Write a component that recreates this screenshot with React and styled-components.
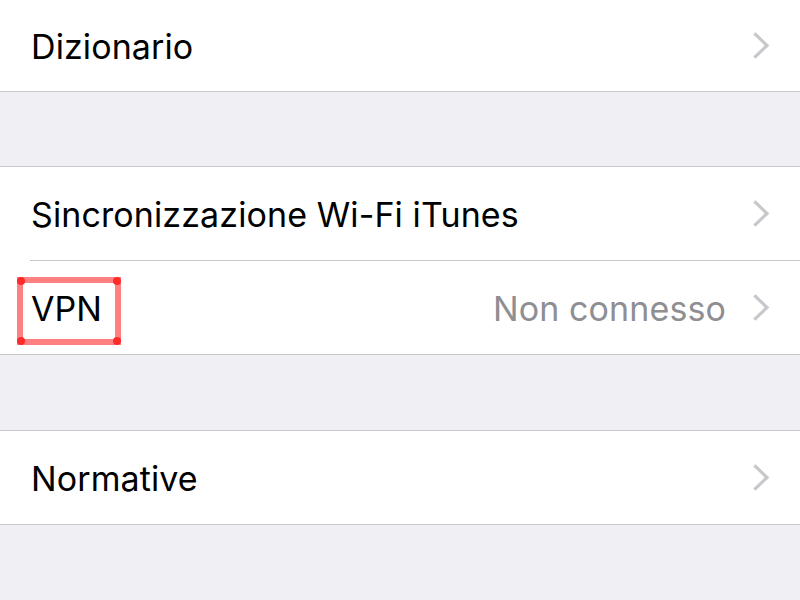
import React from 'react';
import styled, { createGlobalStyle } from 'styled-components';

const GlobalStyle = createGlobalStyle`
  html, body {
    margin: 0;
    padding: 0;
    background-color: #efeff4;
  }
  body {
    font-family: "Inter", "Liberation Sans", "Noto Sans", sans-serif;
    -webkit-font-smoothing: antialiased;
  }
`;

const Page = styled.div`
  width: 800px;
  height: 600px;
  overflow: hidden;
  background-color: #efeff4;
`;

const Group = styled.section`
  margin-top: ${(p) => p.$gap}px;
  background-color: #ffffff;
  border-top: ${(p) => (p.$noTop ? 'none' : '1px solid #c8c7cc')};
  border-bottom: 1px solid #c8c7cc;
`;

const Row = styled.div`
  height: ${(p) => p.$height || 93}px;
  display: flex;
  align-items: center;
  padding: 2px 30px 0 31px;
  box-sizing: border-box;
`;

const Label = styled.span`
  flex: 1;
  font-size: 34px;
  letter-spacing: 0.1px;
  color: #000000;
  white-space: nowrap;
`;

const LabelText = styled.span`
  position: relative;
  display: inline-block;
`;

const Detail = styled.span`
  font-size: 34px;
  letter-spacing: 0.1px;
  color: #8e8e93;
  margin-right: 27px;
  white-space: nowrap;
`;

const ChevronIcon = styled.svg`
  width: 17px;
  height: 27px;
  flex-shrink: 0;
  margin-top: -2px;
`;

const Divider = styled.div`
  height: 1px;
  margin-left: 30px;
  background-color: #c8c7cc;
`;

const Highlight = styled.span`
  position: absolute;
  left: -14px;
  top: -11px;
  width: 104px;
  height: 68px;
  box-sizing: border-box;
  border: 6px solid rgba(255, 60, 60, 0.65);
  pointer-events: none;
`;

const Corner = styled.span`
  position: absolute;
  width: 8px;
  height: 8px;
  border-radius: 50%;
  background-color: #ff2a2a;
  ${(p) => (p.$top ? 'top: -6px;' : 'bottom: -6px;')}
  ${(p) => (p.$left ? 'left: -6px;' : 'right: -6px;')}
`;

const Chevron = () => (
  <ChevronIcon viewBox="0 0 17 27">
    <polyline
      points="2.5,2.5 14,13.5 2.5,24.5"
      fill="none"
      stroke="#c7c7cc"
      strokeWidth="3.2"
      strokeLinecap="square"
      strokeLinejoin="miter"
    />
  </ChevronIcon>
);

const SettingRow = ({ label, detail, highlighted, height }) => (
  <Row $height={height}>
    <Label>
      <LabelText>
        {label}
        {highlighted && (
          <Highlight>
            <Corner $top $left />
            <Corner $top />
            <Corner $left />
            <Corner />
          </Highlight>
        )}
      </LabelText>
    </Label>
    {detail && <Detail>{detail}</Detail>}
    <Chevron />
  </Row>
);

const App = () => {
  return (
    <Page>
      <GlobalStyle />
      <Group $gap={0} $noTop>
        <SettingRow label="Dizionario" height={91} />
      </Group>
      <Group $gap={74}>
        <SettingRow label="Sincronizzazione Wi-Fi iTunes" />
        <Divider />
        <SettingRow label="VPN" detail="Non connesso" highlighted />
      </Group>
      <Group $gap={75}>
        <SettingRow label="Normative" />
      </Group>
    </Page>
  );
};

export default App;
